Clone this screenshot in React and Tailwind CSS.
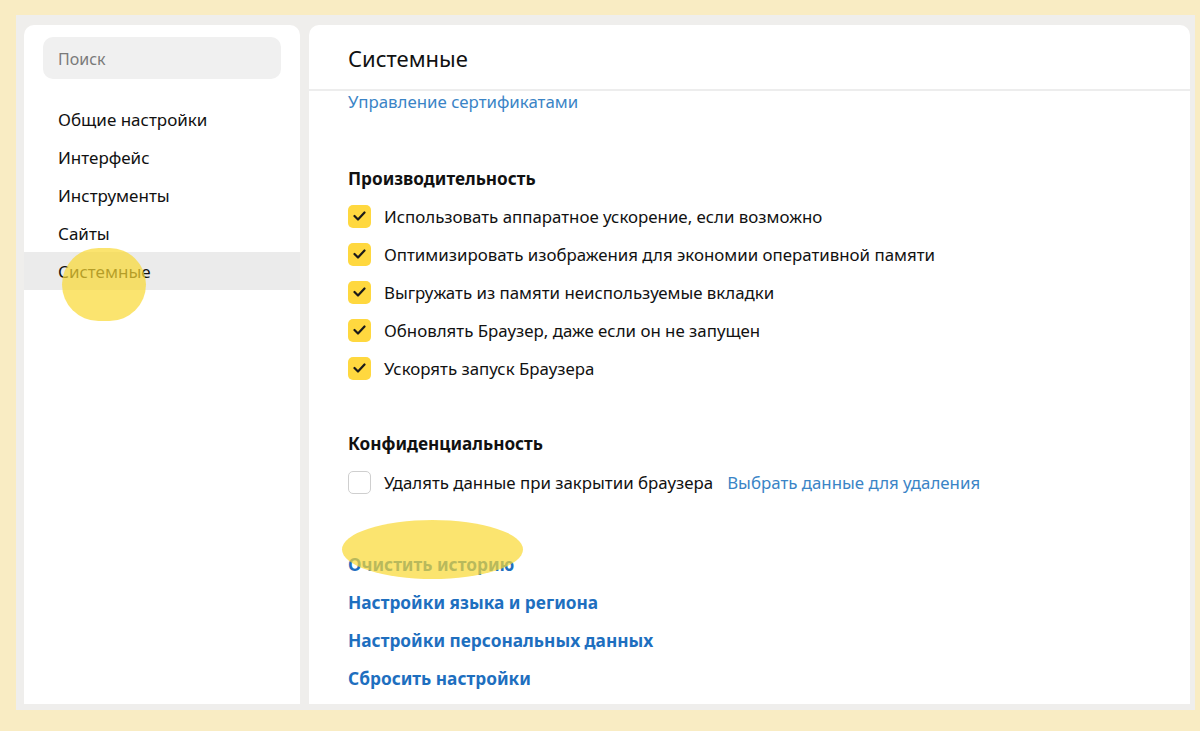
import React from 'react';

const nav = ['Общие настройки', 'Интерфейс', 'Инструменты', 'Сайты', 'Системные'];

const perf = [
  'Использовать аппаратное ускорение, если возможно',
  'Оптимизировать изображения для экономии оперативной памяти',
  'Выгружать из памяти неиспользуемые вкладки',
  'Обновлять Браузер, даже если он не запущен',
  'Ускорять запуск Браузера',
];

const links = [
  'Очистить историю',
  'Настройки языка и региона',
  'Настройки персональных данных',
  'Сбросить настройки',
];

function Check({ on }) {
  if (!on) {
    return <span className="w-[23px] h-[23px] rounded-[5px] border border-[#cfcfcf] bg-white shrink-0" />;
  }
  return (
    <span className="w-[23px] h-[23px] rounded-[5px] bg-[#ffd83f] shrink-0 flex items-center justify-center">
      <svg width="13" height="10" viewBox="0 0 13 10" fill="none">
        <path d="M1.5 5l3.5 3.5L11.5 1.5" stroke="#1a1a1a" strokeWidth="2.2" strokeLinecap="round" strokeLinejoin="round" />
      </svg>
    </span>
  );
}

export default function App() {
  return (
    <div className="w-[1200px] h-[731px] bg-[#f9ecc3] pt-[15px] pl-[16px] pr-[5px] pb-[21px] font-['Noto_Sans',sans-serif] text-[#111]">
      <div className="relative h-full bg-[#efeeec] pt-[10px] pl-[8px] pr-[5px] pb-[6px] flex gap-[9px]">
        {/* Sidebar */}
        <aside className="w-[276px] bg-white rounded-t-[10px] pt-[12px]">
          <div className="mx-[19px] h-[42px] rounded-[10px] bg-[#f0f0f0] flex items-center pl-[15px] pt-[1px] text-[16px] text-[#7a7a7a]">
            Поиск
          </div>
          <nav className="mt-[21px]">
            {nav.map((n) => (
              <div
                key={n}
                className={`h-[38px] flex items-center pl-[34px] pt-[1px] text-[17px] ${n === 'Системные' ? 'bg-[#ebebeb]' : ''}`}
              >
                {n}
              </div>
            ))}
          </nav>
        </aside>

        {/* Main */}
        <main className="flex-1 bg-white rounded-t-[10px]">
          <div className="h-[66px] flex items-center pl-[39px] pt-[2px] text-[22px] border-b-2 border-[#ededed]">
            Системные
          </div>
          <div className="pl-[39px] text-[16.85px]">
            <div className="leading-[22px] text-[#3a84c6]">Управление сертификатами</div>

            <div className="mt-[54px] leading-[24px] font-bold text-[17.2px]">Производительность</div>
            <div className="mt-[6px]">
              {perf.map((p) => (
                <div key={p} className="h-[38px] flex items-center gap-[13px]">
                  <Check on />
                  <span className="pt-[1px]">{p}</span>
                </div>
              ))}
            </div>

            <div className="mt-[45px] leading-[24px] font-bold text-[17.2px]">Конфиденциальность</div>
            <div className="mt-[7px] h-[38px] flex items-center gap-[13px]">
              <Check on={false} />
              <span className="pt-[1px]">Удалять данные при закрытии браузера</span>
              <span className="pt-[1px] ml-[1px] text-[#3a84c6]">Выбрать данные для удаления</span>
            </div>

            <div className="mt-[44px]">
              {links.map((l) => (
                <div key={l} className="h-[38px] flex items-center pt-[1px] text-[17.3px] font-bold text-[#1e6fbf]">
                  {l}
                </div>
              ))}
            </div>
          </div>
        </main>

        {/* Marker highlights */}
        <div className="absolute left-[46px] top-[233px] w-[84px] h-[73px] rounded-full bg-[#fad932] opacity-70" />
        <div className="absolute left-[326px] top-[505px] w-[181px] h-[59px] rounded-[50%] bg-[#fad932] opacity-70" />
      </div>
    </div>
  );
}
